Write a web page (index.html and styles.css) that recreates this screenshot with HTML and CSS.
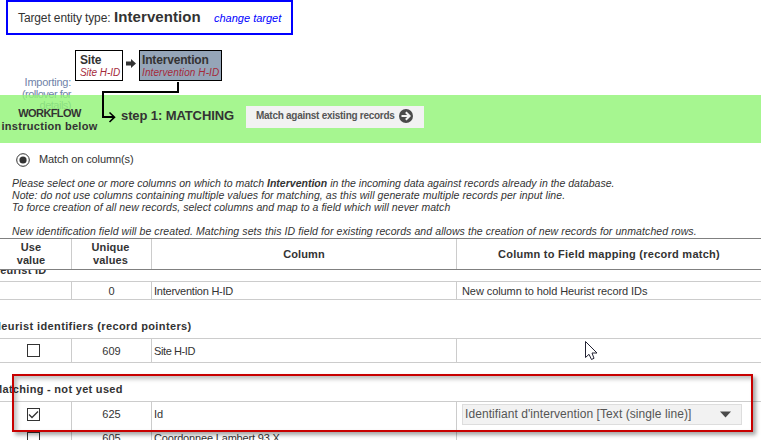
FILE: index.html
```html
<!DOCTYPE html>
<html lang="en">
<head>
<meta charset="utf-8">
<title>Import records: matching</title>
<link rel="stylesheet" href="styles.css">
</head>
<body>
<header class="target">
  <span class="target-label">Target entity type:</span>
  <strong class="target-name">Intervention</strong>
  <a class="target-change">change target</a>
</header>

<section class="flow">
  <div class="importing"><span class="t-imp">Importing:</span><br><span>(rollover for</span><br><span>details)</span></div>
  <div class="entity"><b>Site</b><i>Site H-ID</i></div>
  <svg class="flow-arrow" width="10" height="9" viewBox="0 0 10 9"><path d="M0 2.500h5V0l5 4.500L5 9V6.500H0z" fill="#333"/></svg>
  <div class="entity current"><b>Intervention</b><i>Intervention H-ID</i></div>
</section>

<section class="step">
  <div class="workflow"><span class="t-wf">WORKFLOW</span><br><span class="t-ib">instruction below</span></div>
  <h1>step 1: MATCHING</h1>
  <button class="match"><span>Match against existing records</span>
    <svg width="14" height="14" viewBox="0 0 14 14"><circle cx="7" cy="7" r="7" fill="#4a4a4a"/><path d="M2.500 7h8M6.800 3.200L10.600 7l-3.800 3.800" fill="none" stroke="#f2f2f2" stroke-width="2"/></svg>
  </button>
  <svg class="elbow" width="80" height="44" viewBox="0 0 80 44"><path d="M77 0V10H2V35H13" fill="none" stroke="#000" stroke-width="2"/><path d="M8.500 30.500L13.500 35.200L8.500 40" fill="none" stroke="#000" stroke-width="1.600"/></svg>
</section>

<label class="option"><svg width="14" height="14" viewBox="0 0 14 14"><circle cx="7" cy="7" r="6.300" fill="#fff" stroke="#333"/><circle cx="7" cy="7" r="3.600" fill="#333"/></svg><span>Match on column(s)</span></label>

<div class="notes">
  <p class="n1">Please select one or more columns on which to match <b>Intervention</b> in the incoming data against records already in the database.</p>
  <p class="n2">Note: do not use columns containing multiple values for matching, as this will generate multiple records per input line.</p>
  <p class="n3">To force creation of all new records, select columns and map to a field which will never match</p>
  <p class="n4">New identification field will be created. Matching sets this ID field for existing records and allows the creation of new records for unmatched rows.</p>
</div>

<main class="table">
  <div class="row head"><div>Use<br>value</div><div>Unique<br>values</div><div class="h3">Column</div><div class="h4">Column to Field mapping (record match)</div></div>
  <div class="scroll">
    <h2 class="g1">Heurist ID</h2>
    <div class="row r1"><div></div><div>0</div><div class="name c1">Intervention H-ID</div><div class="map">New column to hold Heurist record IDs</div></div>
    <h2 class="g2">Heurist identifiers (record pointers)</h2>
    <div class="row r2"><div><i class="check"></i></div><div>609</div><div class="name c2">Site H-ID</div><div></div></div>
    <h2 class="g3">Matching - not yet used</h2>
    <div class="row r3"><div><i class="check"><svg width="11" height="11" viewBox="0 0 11 11"><path d="M1 5.500L4 8.500L10 2.500" fill="none" stroke="#333" stroke-width="1.300"/></svg></i></div><div>625</div><div class="name">Id</div><div class="pick"><div class="select"><span>Identifiant d'intervention [Text (single line)]</span><svg width="11" height="7" viewBox="0 0 11 7"><path d="M0 .5h11L5.500 6.500z" fill="#4a4a4a"/></svg></div></div></div>
    <div class="row r4"><div><i class="check"></i></div><div>605</div><div class="name c4">Coordonnee Lambert 93 X</div><div></div></div>
  </div>
</main>

<div class="highlight"></div>
<svg class="cursor" width="13" height="20" viewBox="0 0 13 20"><path d="M.5 .5V16.500L4 13.300L6.500 18.500L9 17.300L7 12H12z" fill="#fff" stroke="#222233"/></svg>
</body>
</html>
```

FILE: styles.css
```css
* { box-sizing: border-box; }
body {
  margin: 0;
  width: 761px;
  height: 440px;
  overflow: hidden;
  position: relative;
  background: #fff;
  color: #333;
  font: 11px/13px "Liberation Sans", Arial, sans-serif;
}
.target {
  display: flex;
  align-items: baseline;
  width: 287px;
  height: 35px;
  margin-left: 6px;
  padding: 6px 0 0 10px;
  border: 2px solid #00f;
  white-space: nowrap;
}
.target-label { font-size: 12px; width: 96px; letter-spacing: -.12px; }
.target-name { font-size: 15px; line-height: 18px; width: 100px; letter-spacing: .08px; }
.target-change { font-size: 11px; font-style: italic; color: #00f; }
.flow {
  display: flex;
  align-items: flex-start;
  height: 60px;
  padding-top: 15px;
}
.importing {
  width: 71px;
  margin: 27px 4px 0 0;
  text-align: right;
  line-height: 11.500px;
  letter-spacing: -.5px;
  color: #6f82a8;
  white-space: nowrap;
}
.t-imp { letter-spacing: -.25px; }
.entity {
  display: flex;
  flex-direction: column;
  width: 48px;
  height: 31px;
  padding: 2px 0 0 4px;
  border: 1px solid #000;
  white-space: nowrap;
}
.entity b { font-size: 12px; line-height: 14px; letter-spacing: -.17px; }
.entity i { font-size: 10px; line-height: 11px; color: #a52a3a; letter-spacing: -.05px; }
.flow-arrow { margin: 9px 3px 0; }
.entity.current { width: 83px; padding-left: 2px; background: #95a5b8; }
.entity.current i { letter-spacing: .1px; }
.step {
  position: relative;
  display: flex;
  height: 48px;
  background: rgba(144, 244, 116, .8);
  white-space: nowrap;
}
.workflow {
  width: 99px;
  margin-top: 12px;
  text-align: center;
  font-weight: bold;
}
.t-wf { letter-spacing: -.6px; }
.t-ib { letter-spacing: .3px; }
h1 { margin: 11px 0 0 22px; font-size: 13px; line-height: 19px; width: 125px; letter-spacing: -.1px; }
.match {
  display: flex;
  align-items: center;
  gap: 4px;
  width: 178px;
  height: 22px;
  margin: 11px 0 0;
  padding: 0 0 3px 10px;
  border: 0;
  background: #f2f2f2;
  color: #555;
  font: bold 10px/12px "Liberation Sans", Arial, sans-serif;
  letter-spacing: -.27px;
}
.elbow { position: absolute; left: 101px; top: -13px; }
.option { display: flex; align-items: center; gap: 9px; height: 14px; margin: 10px 0 0 16px; }
.option span { margin-top: -1px; letter-spacing: -.12px; }
.notes {
  height: 71px;
  padding: 10px 0 0 12px;
  font-size: 10.500px;
  line-height: 12px;
  font-style: italic;
  white-space: nowrap;
}
.notes p { margin: 0; }
.n1 { letter-spacing: .01px; }
.n2 { letter-spacing: .077px; }
.n3 { letter-spacing: .06px; }
.n4 { letter-spacing: .087px; }
.notes .n4 { margin-top: 12px; }
.row { display: grid; grid-template-columns: 72px 80px 305px 1fr; border-top: 1px solid #ccc; border-bottom: 1px solid #ccc; }
.row > div { display: flex; align-items: center; justify-content: center; border-right: 1px solid #ccc; white-space: nowrap; }
.row > div:last-child { border-right: 0; }
.row > div:first-child { padding-right: 5px; }
.row > .name, .row > .map { justify-content: flex-start; padding-left: 2px; }
.row > .map { padding-left: 5px; letter-spacing: -.08px; }
.row > .c1 { letter-spacing: -.24px; }
.row > .c2 { letter-spacing: -.4px; }
.row > .c4 { letter-spacing: -.17px; }
.head { height: 32px; border-color: #808080; font-weight: bold; text-align: center; letter-spacing: .1px; }
.row.head > div:first-child { padding-right: 9px; }
.row.head > div:nth-child(2) { padding-right: 2px; }
.head > .h4 { letter-spacing: .26px; }
.scroll { height: 170px; overflow: hidden; }
h2 { margin: 0; font-size: 11px; line-height: 13px; white-space: nowrap; }
.g1 { height: 11px; margin-left: -8px; line-height: -0px; line-height: 0; letter-spacing: .25px; }
.g2, .g3 { height: 38px; padding-top: 20px; margin-left: -7px; }
.g2 { letter-spacing: .38px; }
.g3 { letter-spacing: .3px; }
.r1 { height: 19px; }
.r1 > div, .r2 > div:not(:first-child) { padding-top: 2px; }
.r2 { height: 25px; }
.r3 { height: 28px; border-bottom: 0; }
.r3 > div { padding-bottom: 2px; }
.r4 { height: 18px; border: 0; }
.check { width: 13px; height: 13px; border: 1px solid #333; background: #fff; display: block; }
.check svg { display: block; }
.row > .pick { justify-content: flex-start; padding-left: 5px; }
.select {
  display: flex;
  align-items: center;
  justify-content: space-between;
  width: 280px;
  height: 21px;
  padding: 0 10px 1px 2px;
  border: 1px solid #ddd;
  background: #f2f2f2;
  color: #555;
  font-size: 12px;
  letter-spacing: .07px;
}
.highlight {
  position: absolute;
  left: 12px;
  top: 374px;
  width: 741px;
  height: 58px;
  border: 2px solid #c80000;
  box-shadow: 3px 3px 4px rgba(0, 0, 0, .35), inset 3px 3px 4px rgba(0, 0, 0, .25);
}
.cursor { position: absolute; left: 585px; top: 341px; }
```
